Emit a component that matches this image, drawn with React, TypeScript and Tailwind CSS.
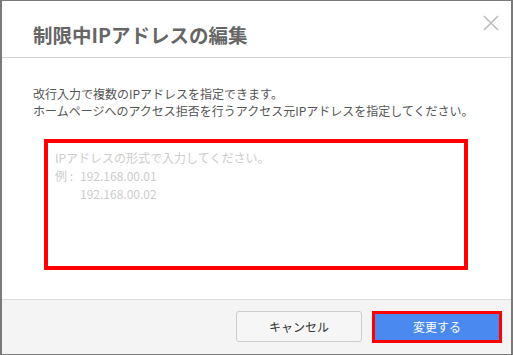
export default function App() {
  return (
    <div
      className="w-[513px] h-[355px] bg-white border border-[#7a7a7a] border-x-2 flex flex-col overflow-hidden"
      style={{ fontFamily: '"Noto Sans CJK JP", "Noto Sans", sans-serif' }}
    >
      {/* Header */}
      <div className="relative h-[57px] shrink-0 border-b border-[#d2d2d2] flex items-center pl-[31px] pt-[12px]">
        <h1 className="text-[19.5px] font-bold text-[#666666] leading-none">制限中IPアドレスの編集</h1>
        <button className="absolute right-[12px] top-[13px] w-[17px] h-[17px] flex items-center justify-center">
          <svg viewBox="0 0 16 16" className="w-[16px] h-[16px]" fill="none" stroke="#bdbdbd" strokeWidth="1.6">
            <path d="M1 1l14 14M15 1L1 15" />
          </svg>
        </button>
      </div>

      {/* Body */}
      <div className="flex-1 pt-[27px] pl-[31px] pr-[44px]">
        <p className="text-[12px] leading-[17px] text-[#555555] whitespace-nowrap">
          改行入力で複数のIPアドレスを指定できます。
          <br />
          ホームページへのアクセス拒否を行うアクセス元IPアドレスを指定してください。
        </p>
        <div className="mt-[20px] ml-[11px] w-[424px] h-[131px] border-4 border-[#ff0000] px-[7px] pt-[6px]">
          <div className="text-[12px] leading-[18px] text-[#cccccc]">
            <div>IPアドレスの形式で入力してください。</div>
            <div className="flex">
              <span className="w-[25px]">例 :</span>
              <span>192.168.00.01</span>
            </div>
            <div className="pl-[25px]">192.168.00.02</div>
          </div>
        </div>
      </div>

      {/* Footer */}
      <div className="h-[55px] shrink-0 border-t border-[#dddddd] bg-[#f4f4f4] flex justify-end items-start pt-[11px] pr-[9px] gap-[10px]">
        <button className="w-[126px] h-[31px] rounded-[3px] border border-[#cccccc] bg-[#f6f6f6] text-[12px] text-[#333333]">
          キャンセル
        </button>
        <button className="w-[130px] h-[32px] border-[3px] border-[#ff0000] bg-[#4a8af0] text-[12px] text-white">
          変更する
        </button>
      </div>
    </div>
  );
}
